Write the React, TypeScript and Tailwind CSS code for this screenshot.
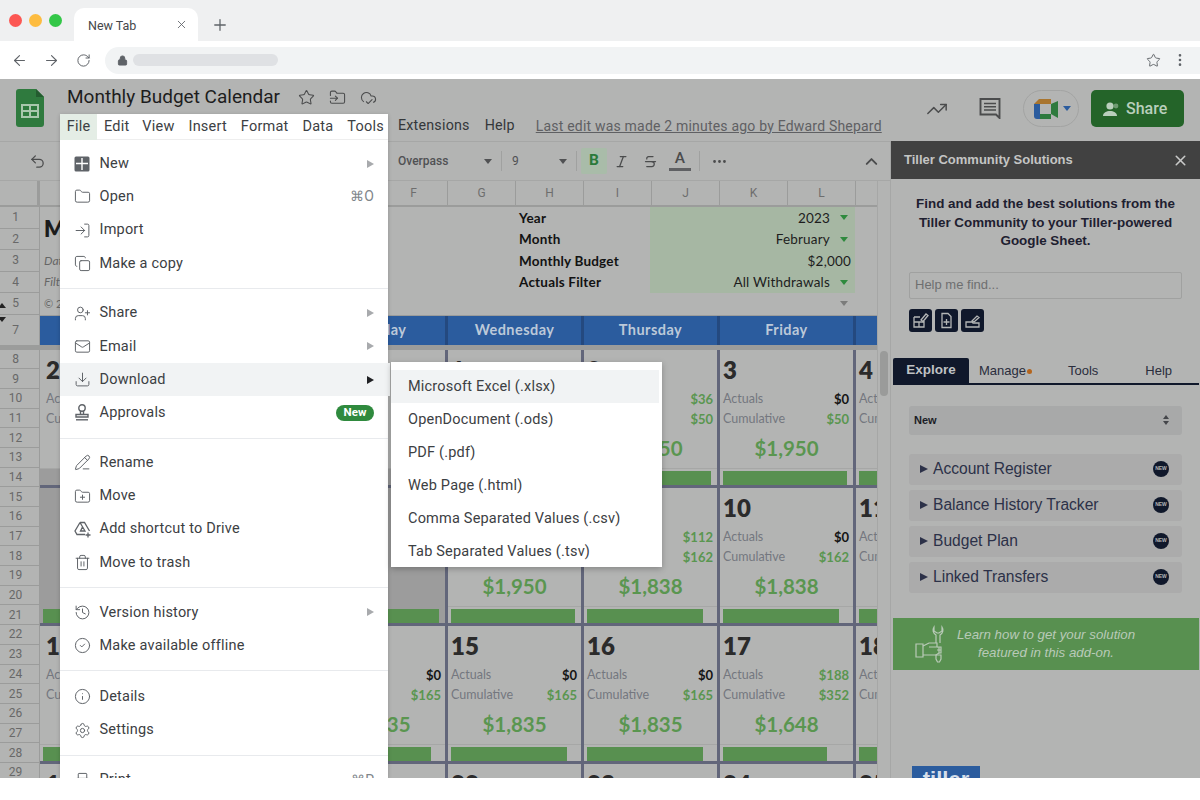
import React from "react";
import {
  ArrowLeft, ArrowRight, RotateCw, Lock, Star, X, Plus, FolderInput, CloudCheck, Folder, LogIn, Copy, UserPlus, Mail, Download,
  PencilLine, FolderPlus, Trash2, History, CircleCheck, Info, Settings, Printer, TrendingUp, Undo2, Italic,
  Strikethrough, Ellipsis, ChevronUp, EllipsisVertical,
} from "lucide-react";

type Cell = { n?: string; a?: string; aGreen?: boolean; c?: string; big?: string; bar?: number; gray?: boolean; graySlot?: boolean };

const weeks: Cell[][] = [
  [
    { n: "29", a: "$0", c: "$0", graySlot: true },
    { n: "30", a: "$0", c: "$0", graySlot: true },
    { n: "31", a: "$0", c: "$0", graySlot: true },
    { n: "1", a: "$14", aGreen: true, c: "$14", big: "$1,986", bar: 124 },
    { n: "2", a: "$36", aGreen: true, c: "$50", big: "$1,950", bar: 124 },
    { n: "3", a: "$0", c: "$50", big: "$1,950", bar: 124 },
    { n: "4", big: "$1,950", bar: 124 },
  ],
  [
    { gray: true, bar: 124 },
    { gray: true, bar: 124 },
    { gray: true, bar: 124 },
    { n: "8", a: "$0", c: "$50", big: "$1,950", bar: 124 },
    { n: "9", a: "$112", aGreen: true, c: "$162", big: "$1,838", bar: 116 },
    { n: "10", a: "$0", c: "$162", big: "$1,838", bar: 116 },
    { n: "11", big: "$1,838", bar: 116 },
  ],
  [
    { n: "12", a: "$0", c: "$165", big: "$1,835", bar: 116 },
    { n: "13", a: "$0", c: "$165", big: "$1,835", bar: 116 },
    { n: "14", a: "$0", c: "$165", big: "$1,835", bar: 116 },
    { n: "15", a: "$0", c: "$165", big: "$1,835", bar: 116 },
    { n: "16", a: "$0", c: "$165", big: "$1,835", bar: 116 },
    { n: "17", a: "$188", aGreen: true, c: "$352", big: "$1,648", bar: 104 },
    { n: "18", big: "$1,648", bar: 104 },
  ],
  [{ n: "19" }, { n: "20" }, { n: "21" }, { n: "22" }, { n: "23" }, { n: "24" }, { n: "25" }],
];

const days = ["Sunday", "Monday", "Tuesday", "Wednesday", "Thursday", "Friday", "Saturday"];
const columns = ["A", "B", "C", "D", "E", "F", "G", "H", "I", "J", "K", "L", "M"];
const filters = [
  ["Year", "2023", true],
  ["Month", "February", true],
  ["Monthly Budget", "$2,000", false],
  ["Actuals Filter", "All Withdrawals", true],
] as const;

function DayCell({ c, first }: { c: Cell; first: boolean }) {
  const pad = first ? "pl-[6px] pr-[3px]" : "px-[3px]";
  return (
    <div className={`w-[136px] h-[138px] shrink-0 border-r-[3px] border-b-[3px] border-[#62667a] flex flex-col ${c.gray ? "bg-[#9c9c9c]" : ""}`}>
      <div className={`h-[40px] ${pad} text-[24px] font-extrabold leading-[40px] text-[#2b2b2b]`}>{c.n}</div>
      <div className={`h-[20px] ${pad} flex items-center justify-between text-[12.5px] text-[#74777f]`}>
        {c.n && <span>Actuals</span>}
        {c.a && <span className={`text-[13px] font-bold pr-[1px] ${c.aGreen ? "text-[#5a9650]" : "text-[#151515]"}`}>{c.a}</span>}
      </div>
      <div className={`h-[20px] ${pad} flex items-center justify-between text-[12.5px] text-[#74777f]`}>
        {c.n && <span>Cumulative</span>}
        {c.c && <span className="text-[13px] font-bold pr-[1px] text-[#5a9650]">{c.c}</span>}
      </div>
      <div className="h-[38px] flex items-center justify-center text-[20.5px] font-bold text-[#5a9650]">{c.big}</div>
      <div className={`h-[1px] ${c.gray ? "" : "bg-[#a6a7a6]"}`} />
      <div className={`h-[16px] pt-[2px] pl-[3px] ${c.graySlot ? "bg-[#9c9c9c]" : ""}`}>
        {c.bar && <div className="h-[14px] bg-[#589050]" style={{ width: c.bar }} />}
      </div>
    </div>
  );
}

const RowNum = ({ n, h }: { n: number; h: string }) => (
  <div className={`${h} shrink-0 pr-[8px] flex items-center justify-center border-b border-[#9b9c9b] text-[12px] text-[#686868]`}>{n}</div>
);

const NewDocIcon = () => (
  <svg width="16" height="16" viewBox="0 0 16 16">
    <rect x="0.5" y="0.5" width="15" height="15" rx="1.5" fill="#5f6368" />
    <path d="M2 7.500h12M8 2v12" stroke="#fff" strokeWidth="1.4" fill="none" />
  </svg>
);

const ShortcutIcon = () => (
  <svg width="18" height="17" viewBox="0 0 18 17" fill="none" stroke="#5f6368" strokeWidth="1.3">
    <path d="M6 1.500h4.500l5 8.500M6 1.500L1 10l2 3.500h8M6 1.500l5 8.500H6.500L8.500 6" />
    <path d="M14 11.500v5M11.500 14h5" />
  </svg>
);

const StampIcon = () => (
  <svg width="16" height="17" viewBox="0 0 16 17" fill="none" stroke="#5f6368" strokeWidth="1.4">
    <circle cx="8" cy="4" r="3.200" />
    <path d="M6.500 7v3M9.500 7v3M2 10.500h12v2.500H2z" />
    <path d="M2 15.800h12" />
  </svg>
);

const CommentIcon = () => (
  <svg width="22" height="21" viewBox="0 0 22 21" fill="none" stroke="#4b4c4d" strokeWidth="1.900">
    <path d="M1.500 1h19v19l-3.500-3.500H1.500z" />
    <path d="M5 5.500h12M5 8.800h12M5 12h12" strokeWidth="1.500" />
  </svg>
);

const ic = { size: 17, strokeWidth: 1.4, color: "#5f6368" };

type Item = { icon?: React.ReactNode; label: string; arrow?: boolean; shortcut?: string; active?: boolean; badge?: boolean };
const menuGroups: Item[][] = [
  [
    { icon: <NewDocIcon />, label: "New", arrow: true },
    { icon: <Folder {...ic} />, label: "Open", shortcut: "⌘O" },
    { icon: <LogIn {...ic} />, label: "Import" },
    { icon: <Copy {...ic} />, label: "Make a copy" },
  ],
  [
    { icon: <UserPlus {...ic} />, label: "Share", arrow: true },
    { icon: <Mail {...ic} />, label: "Email", arrow: true },
    { icon: <Download {...ic} />, label: "Download", arrow: true, active: true },
    { icon: <StampIcon />, label: "Approvals", badge: true },
  ],
  [
    { icon: <PencilLine {...ic} />, label: "Rename" },
    { icon: <FolderPlus {...ic} />, label: "Move" },
    { icon: <ShortcutIcon />, label: "Add shortcut to Drive" },
    { icon: <Trash2 {...ic} />, label: "Move to trash" },
  ],
  [
    { icon: <History {...ic} />, label: "Version history", arrow: true },
    { icon: <CircleCheck {...ic} />, label: "Make available offline" },
  ],
  [
    { icon: <Info {...ic} />, label: "Details" },
    { icon: <Settings {...ic} />, label: "Settings" },
  ],
  [{ icon: <Printer {...ic} />, label: "Print", shortcut: "⌘P" }],
];

function MenuRow({ it }: { it: Item }) {
  return (
    <div className={`h-[33.25px] flex items-center pl-[14px] pr-[14px] ${it.active ? "bg-[#f1f3f4] w-[330px]" : ""}`}>
      <span className="w-[25.500px] flex items-center">{it.icon}</span>
      <span className="text-[14.500px] tracking-[0.2px] text-[#3c4043]">{it.label}</span>
      <span className="ml-auto flex items-center">
        {it.arrow && <span className={`block w-0 h-0 mr-[0px] border-y-[4px] border-y-transparent border-l-[7px] ${it.active ? "border-l-[#202124] mr-[2px]" : "border-l-[#a8aaad]"}`} />}
        {it.shortcut && <span className="text-[14px] text-[#80868b]">{it.shortcut}</span>}
        {it.badge && <span className="h-[16px] w-[38px] rounded-full bg-[#2f8a3e] text-white text-[11.5px] font-bold flex items-center justify-center">New</span>}
      </span>
    </div>
  );
}

const accordion = ["Account Register", "Balance History Tracker", "Budget Plan", "Linked Transfers"];
const Arrow = ({ color }: { color: string }) => <span className="block w-0 h-0 border-x-[4px] border-x-transparent border-t-[5px]" style={{ borderTopColor: color }} />;

export default function App() {
  return (
    <div className="w-[1200px] h-[800px] bg-white overflow-hidden flex flex-col" style={{ fontFamily: "Roboto, 'Liberation Sans', sans-serif" }}>
      {/* tab strip */}
      <div className="h-[41px] shrink-0 bg-[#eff0f1] flex items-end pl-[9px]">
        <div className="h-[41px] flex items-center gap-[7px] pr-[12px]">
          <span className="w-[13px] h-[13px] rounded-full bg-[#fc5753]" />
          <span className="w-[13px] h-[13px] rounded-full bg-[#fdbc40]" />
          <span className="w-[13px] h-[13px] rounded-full bg-[#33c748]" />
        </div>
        <div className="w-[124px] h-[33px] bg-white rounded-t-[10px] flex items-center pl-[14px] pr-[10px] text-[12.5px] text-[#45474a]">
          <span className="mt-[3px]">New Tab</span>
          <X size={13} strokeWidth={1.6} color="#5f6368" className="ml-auto" />
        </div>
        <Plus size={18} strokeWidth={1.7} color="#5f6368" className="ml-[13px] mb-[7px]" />
      </div>
      {/* address bar */}
      <div className="h-[38px] shrink-0 bg-white flex items-center pl-[11px]">
        <ArrowLeft size={17} strokeWidth={1.6} color="#5f6368" />
        <ArrowRight size={17} strokeWidth={1.6} color="#5f6368" className="ml-[15px]" />
        <RotateCw size={15} strokeWidth={1.6} color="#5f6368" className="ml-[16px]" />
        <div className="ml-[14px] flex-1 h-[27px] bg-[#f1f3f4] rounded-l-full flex items-center pl-[12px]">
          <Lock size={11} color="#5f6368" fill="#5f6368" />
          <div className="ml-[5px] w-[145px] h-[12px] rounded-full bg-[#dfe1e4]" />
          <Star size={15} strokeWidth={1.5} color="#5f6368" className="ml-auto" />
          <EllipsisVertical size={16} color="#5f6368" className="ml-[11px] mr-[12px]" />
        </div>
      </div>

      {/* page */}
      <div className="h-[699px] shrink-0 bg-[#b3b4b3] relative overflow-hidden flex flex-col">
        {/* sheet header */}
        <div className="h-[62px] shrink-0 flex items-start">
          <svg width="28" height="38" viewBox="0 0 28 38" className="ml-[16px] mt-[10px] shrink-0">
            <path d="M3 0h17l8 8v27a3 3 0 0 1-3 3H3a3 3 0 0 1-3-3V3a3 3 0 0 1 3-3z" fill="#2f7a3e" />
            <path d="M20 0l8 8h-8z" fill="#235c2f" />
            <rect x="6" y="16" width="16" height="12" fill="none" stroke="#a9c7ad" strokeWidth="2" />
            <path d="M14 16v12M6 22h16" stroke="#a9c7ad" strokeWidth="2" />
          </svg>
          <div className="ml-[23px] w-[830px] shrink-0">
            <div className="flex items-center h-[36px]">
              <span className="text-[19px] text-[#1d1d1d]">Monthly Budget Calendar</span>
              <Star size={17} strokeWidth={1.5} color="#4b4c4d" className="ml-[18px]" />
              <FolderInput size={17} strokeWidth={1.5} color="#4b4c4d" className="ml-[14px]" />
              <CloudCheck size={17} strokeWidth={1.5} color="#4b4c4d" className="ml-[14px]" />
            </div>
            <div className="flex items-center h-[22px] text-[14.300px] tracking-[0.2px] text-[#34373a]">
              <span className="ml-[331px]">Extensions</span>
              <span className="ml-[15px]">Help</span>
              <span className="ml-[21px] text-[14px] underline text-[#5f6063]">Last edit was made 2 minutes ago by Edward Shepard</span>
            </div>
          </div>
          <div className="flex items-center mt-[11px] ml-[29px]">
            <TrendingUp size={22} strokeWidth={1.6} color="#4b4c4d" />
            <span className="ml-[31px]"><CommentIcon /></span>
            <div className="ml-[22px] w-[56px] h-[37px] rounded-full border border-[#a3a4a3] flex items-center pl-[10px] gap-[3px]">
              <svg width="26" height="20" viewBox="0 0 26 20">
                <path d="M0 5h6v10H0z" fill="#2b5c9e" />
                <path d="M0 5l5-5h12v5H6z" fill="#a9752e" />
                <path d="M0 15h17v5H3a3 3 0 0 1-3-3z" fill="#2b5c9e" />
                <path d="M11 10h6v10H6v-5h5z" fill="#2f7a3e" />
                <path d="M17 5v10l7 4V2z" fill="#2f7a3e" />
                <rect x="6" y="5" width="11" height="10" fill="#b3b4b3" />
              </svg>
              <Arrow color="#2b5c9e" />
            </div>
            <div className="ml-[12px] w-[93px] h-[37px] rounded-[5px] bg-[#246429] flex items-center pl-[12px] gap-[5px] text-[16px] font-medium text-[#b9cfbc]">
              <svg width="18" height="16" viewBox="0 0 18 16" fill="#b9cfbc"><circle cx="7" cy="5" r="3.600" /><path d="M0 15c0-3.500 3.500-5 7-5s7 1.500 7 5z" /><circle cx="13" cy="5" r="2.400" opacity="0.5" /></svg>
              Share
            </div>
          </div>
        </div>

        <div className="flex-1 flex min-h-0">
          {/* left side */}
          <div className="w-[890px] shrink-0 flex flex-col">
            {/* toolbar */}
            <div className="h-[40px] shrink-0 border-t border-b border-[#a6a7a6] flex items-center text-[#4b4c4d]">
              <Undo2 size={17} strokeWidth={1.8} className="ml-[29px]" />
              <span className="ml-[352px] text-[12px] w-[86px] font-medium text-[#505153]">Overpass</span>
              <Arrow color="#505153" />
              <span className="ml-[9px] h-[20px] w-px bg-[#a0a1a0]" />
              <span className="ml-[10px] text-[12px] w-[47px] text-[#505153]">9</span>
              <Arrow color="#505153" />
              <span className="ml-[9px] h-[20px] w-px bg-[#a0a1a0]" />
              <span className="ml-[4px] w-[26px] h-[26px] rounded-[2px] bg-[#a9bca9] flex items-center justify-center text-[15.5px] font-bold text-[#2b7a3a]">B</span>
              <Italic size={15} strokeWidth={2} className="ml-[7px]" />
              <Strikethrough size={15} strokeWidth={2} className="ml-[14px]" />
              <span className="ml-[11px] flex flex-col items-center w-[22px]">
                <span className="text-[15.5px] leading-[15px] font-medium">A</span>
                <span className="w-[22px] h-[3px] bg-[#5f6063] mt-[2px]" />
              </span>
              <span className="ml-[8px] h-[20px] w-px bg-[#a0a1a0]" />
              <Ellipsis size={17} strokeWidth={2} className="ml-[11px]" />
              <ChevronUp size={19} strokeWidth={2.4} className="ml-[134px]" />
            </div>
            {/* grid + scrollbar */}
            <div className="flex-1 min-h-0 flex" style={{ fontFamily: "Lato, 'Liberation Sans', sans-serif" }}>
              <div className="w-[877px] shrink-0 relative overflow-hidden flex flex-col">
                {/* column header */}
                <div className="h-[26px] shrink-0 flex border-b-2 border-[#9b9c9b]" style={{ fontFamily: "Roboto, sans-serif" }}>
                  <div className="w-[40px] shrink-0 border-r-[3px] border-[#9b9c9b]" />
                  {columns.map((c) => (
                    <div key={c} className="w-[68px] shrink-0 border-r border-[#9b9c9b] flex items-center justify-center text-[12px] text-[#6e6e6e]">{c}</div>
                  ))}
                </div>
                <div className="flex flex-1 min-h-0">
                  {/* row numbers */}
                  <div className="w-[40px] shrink-0 flex flex-col border-r border-[#9b9c9b]" style={{ fontFamily: "Roboto, sans-serif" }}>
                    {[1, 2, 3, 4, 5].map((n) => <RowNum key={n} n={n} h="h-[21.5px]" />)}
                    <RowNum n={7} h="h-[31px]" />
                    <div className="h-[4px] shrink-0 bg-[#9b9c9b]" />
                    {Array.from({ length: 22 }, (_, i) => <RowNum key={i} n={i + 8} h="h-[19.7px]" />)}
                  </div>
                  <div className="flex-1 min-w-0 flex flex-col overflow-hidden">
                    {/* top form area */}
                    <div className="h-[107.5px] shrink-0 flex">
                      <div className="w-[479px] shrink-0 pl-[4px] flex flex-col">
                        <div className="h-[43px] text-[22px] font-extrabold text-[#1c1c1c] flex items-center">M</div>
                        <div className="h-[21.5px] text-[12px] italic text-[#666] flex items-center">Dat</div>
                        <div className="h-[21.5px] text-[12px] italic text-[#666] flex items-center">Filt</div>
                        <div className="h-[21.5px] text-[11px] text-[#666] flex items-center">© 2</div>
                      </div>
                      <div className="w-[131px] shrink-0 flex flex-col">
                        {filters.map((f) => <div key={f[0]} className="h-[21.5px] flex items-center text-[13.5px] font-bold text-[#121212] tracking-[0.2px]">{f[0]}</div>)}
                      </div>
                      <div className="w-[205px] shrink-0 flex flex-col">
                        <div className="h-[86px] bg-[#a6b7a3] flex flex-col">
                          {filters.map((f) => (
                            <div key={f[0]} className="h-[21.5px] pr-[4px] flex items-center justify-end gap-[10px] text-[13.5px] text-[#1d1d1d] tracking-[0.2px]">
                              {f[1]}
                              {f[2] && <span className="mr-[3px]"><Arrow color="#2f8a3e" /></span>}
                            </div>
                          ))}
                        </div>
                        <div className="h-[21.5px] flex items-center justify-end pr-[7px]"><Arrow color="#7b7c7b" /></div>
                      </div>
                    </div>
                    {/* weekday bar */}
                    <div className="h-[31px] shrink-0 flex bg-[#2b5c9e] border-y border-[#9b9c9b]">
                      {days.map((d) => (
                        <div key={d} className="w-[136px] shrink-0 border-r-[3px] border-[#24497f] flex items-center justify-center text-[14.5px] font-bold tracking-[0.45px] text-[#bcc9d9]">{d}</div>
                      ))}
                    </div>
                    <div className="h-[4px] shrink-0 bg-[#9b9c9b]" />
                    {weeks.map((w, i) => (
                      <div key={i} className="flex shrink-0">
                        {w.map((c, j) => <DayCell key={j} c={c} first={j === 0} />)}
                      </div>
                    ))}
                  </div>
                </div>
              </div>
              {/* scrollbar */}
              <div className="w-[13px] shrink-0 border-l border-[#a6a7a6] pl-[2px] pt-[170px]">
                <div className="w-[8px] h-[45px] rounded-full bg-[#9a9b9a]" />
              </div>
            </div>
          </div>

          {/* sidebar */}
          <div className="w-[310px] shrink-0 border-l border-[#a6a7a6] flex flex-col" style={{ fontFamily: "'Liberation Sans', Arial, sans-serif" }}>
            <div className="h-[38px] shrink-0 bg-[#414141] flex items-center pl-[13px] pr-[11px] text-[13px] font-bold text-[#c4c5c4]">
              Tiller Community Solutions
              <X size={17} strokeWidth={2.2} color="#c9cac9" className="ml-auto" />
            </div>
            <div className="pt-[16px] px-[10px] text-center text-[13.4px] font-bold leading-[18.5px] text-[#1e2030]">
              <div>Find and add the best solutions from the</div>
              <div>Tiller Community to your Tiller-powered</div>
              <div>Google Sheet.</div>
            </div>
            <div className="mt-[21px] mx-[18px] h-[27px] shrink-0 border border-[#a0a1a0] rounded-[2px] pl-[5px] flex items-center text-[13px] text-[#6e6f70]">Help me find...</div>
            <div className="mt-[10px] mx-[18px] flex gap-[3px]">
              {[0, 1, 2].map((i) => (
                <div key={i} className="w-[23px] h-[23px] rounded-[3px] bg-[#10182b] flex items-center justify-center">
                  <svg width="17" height="17" viewBox="0 0 17 17" fill="none" stroke="#b4b6b6" strokeWidth="1.3">
                    {i === 0 && <><path d="M2 5h6M2 5v10h10V9M2 10h10M7 10v5" /><path d="M9 8l5-6 2 1.500-5 6z" /></>}
                    {i === 1 && <><path d="M4 1.500h6l3 3v11H4z" /><path d="M8.500 7v6M5.500 10h6" /></>}
                    {i === 2 && <><path d="M2 10h6l1 1h6v4H2z" /><path d="M8 9l5-5 2 1.500-5 4.500z" /></>}
                  </svg>
                </div>
              ))}
            </div>
            <div className="mt-[27px] ml-[2px] mr-[1px] h-[26px] shrink-0 border-b-2 border-[#10182b] flex items-center text-[13px] text-[#2a2d3c]">
              <div className="w-[76px] h-[25px] bg-[#10182b] rounded-t-[2px] flex items-center justify-center font-bold text-[13.5px] text-[#bfc1c4]">Explore</div>
              <span className="ml-[10px]">Manage</span>
              <span className="ml-[1px] mt-[1px] w-[5px] h-[5px] rounded-full bg-[#b5651d]" />
              <span className="ml-[36px]">Tools</span>
              <span className="ml-[47px]">Help</span>
            </div>
            <div className="mt-[21px] mx-[18px] h-[29px] shrink-0 rounded-[3px] bg-[#a8a9a9] flex items-center justify-between pl-[5px] pr-[13px] text-[11px] font-bold text-[#1b1d26]">
              New
              <span className="flex flex-col gap-[2px]">
                <span className="block w-0 h-0 border-x-[3.5px] border-x-transparent border-b-[4.5px] border-b-[#44464a]" />
                <span className="block w-0 h-0 border-x-[3.5px] border-x-transparent border-t-[4.5px] border-t-[#44464a]" />
              </span>
            </div>
            <div className="mt-[19px] mx-[18px] flex flex-col gap-[5px]">
              {accordion.map((a) => (
                <div key={a} className="h-[31px] rounded-[3px] bg-[#ababab] flex items-center pl-[11px] pr-[13px] text-[15.6px] text-[#2c3148]">
                  <span className="block w-0 h-0 mr-[5px] border-y-[4.5px] border-y-transparent border-l-[8px] border-l-[#2c3148]" />
                  {a}
                  <span className="ml-auto w-[16px] h-[16px] rounded-full bg-[#10182b] flex items-center justify-center text-[5px] font-bold text-[#b4b6b6]">NEW</span>
                </div>
              ))}
            </div>
            <div className="mt-[25px] ml-[2px] mr-[1px] h-[52px] shrink-0 bg-[#589050] flex items-center">
              <svg width="32" height="38" viewBox="0 0 32 38" fill="none" stroke="#b9cab8" strokeWidth="1.2" className="ml-[22px] shrink-0">
                <path d="M1 19h7v13H1z" />
                <path d="M8 21l6-3h8v4h-8M8 30h13l3-2v-6" />
                <path d="M22 22h4v3h-4M22 25h4v3h-2" />
                <path d="M21 18V10a5.500 5.500 0 0 1-2-8v4l3 2h2l3-2V2a5.500 5.500 0 0 1-2 8v8" />
                <path d="M21 30h5v4l-1.500 3h-2L21 34z" />
              </svg>
              <div className="ml-[4px] w-[190px] text-center text-[13.3px] italic leading-[18px] text-[#b9cab8]">
                <div>Learn how to get your solution</div>
                <div>featured in this add-on.</div>
              </div>
            </div>
            <div className="mt-[96px] ml-[21px] w-[68px] h-[40px] pt-[2px] bg-[#2b5c9e] text-center text-[22px] font-bold leading-[24px] text-[#d5deea] shrink-0">tiller</div>
          </div>
        </div>

        {/* File menu overlay */}
        <div className="absolute left-[60px] top-[35px] w-[328px] h-[664px] bg-white shadow-[0_1px_4px_rgba(0,0,0,0.2)] flex flex-col">
          <div className="h-[26px] shrink-0 flex items-center text-[14.5px] tracking-[0.2px] text-[#3c4043] border-b border-[#eeeeee]">
            <span className="w-[37px] h-[26px] bg-[#e4ede5] flex items-center justify-center">File</span>
            <span className="ml-[7px]">Edit</span>
            <span className="ml-[13px]">View</span>
            <span className="ml-[14px]">Insert</span>
            <span className="ml-[14px]">Format</span>
            <span className="ml-[14px]">Data</span>
            <span className="ml-[14px]">Tools</span>
          </div>
          <div className="pt-[7px]">
            {menuGroups.map((g, i) => (
              <div key={i} className={i === 0 ? "" : i === 4 ? "border-t border-[#e8eaed] mt-[8px] pt-[9px]" : "border-t border-[#e8eaed] mt-[8px] pt-[7.6px]"}>
                {g.map((it) => <MenuRow key={it.label} it={it} />)}
              </div>
            ))}
          </div>
        </div>

        {/* Download submenu overlay */}
        <div className="absolute left-[391px] top-[283px] w-[271px] h-[205px] bg-white pt-[8px] shadow-[0_2px_6px_rgba(0,0,0,0.25)] overflow-hidden" style={{ fontFamily: "Roboto, sans-serif" }}>
          {["Microsoft Excel (.xlsx)", "OpenDocument (.ods)", "PDF (.pdf)", "Web Page (.html)", "Comma Separated Values (.csv)", "Tab Separated Values (.tsv)"].map((s, i) => (
            <div key={s} className={`h-[33px] pl-[17px] mr-[3px] flex items-center text-[14.5px] tracking-[0.2px] text-[#3c4043] ${i === 0 ? "bg-[#f1f3f4]" : ""}`}>{s}</div>
          ))}
        </div>

        {/* hidden-row arrows */}
        <span className="absolute left-[-2px] top-[224px] block w-0 h-0 border-x-[4px] border-x-transparent border-b-[5px] border-b-[#222]" />
        <span className="absolute left-[-2px] top-[238px] block w-0 h-0 border-x-[4px] border-x-transparent border-t-[5px] border-t-[#222]" />
      </div>
    </div>
  );
}
